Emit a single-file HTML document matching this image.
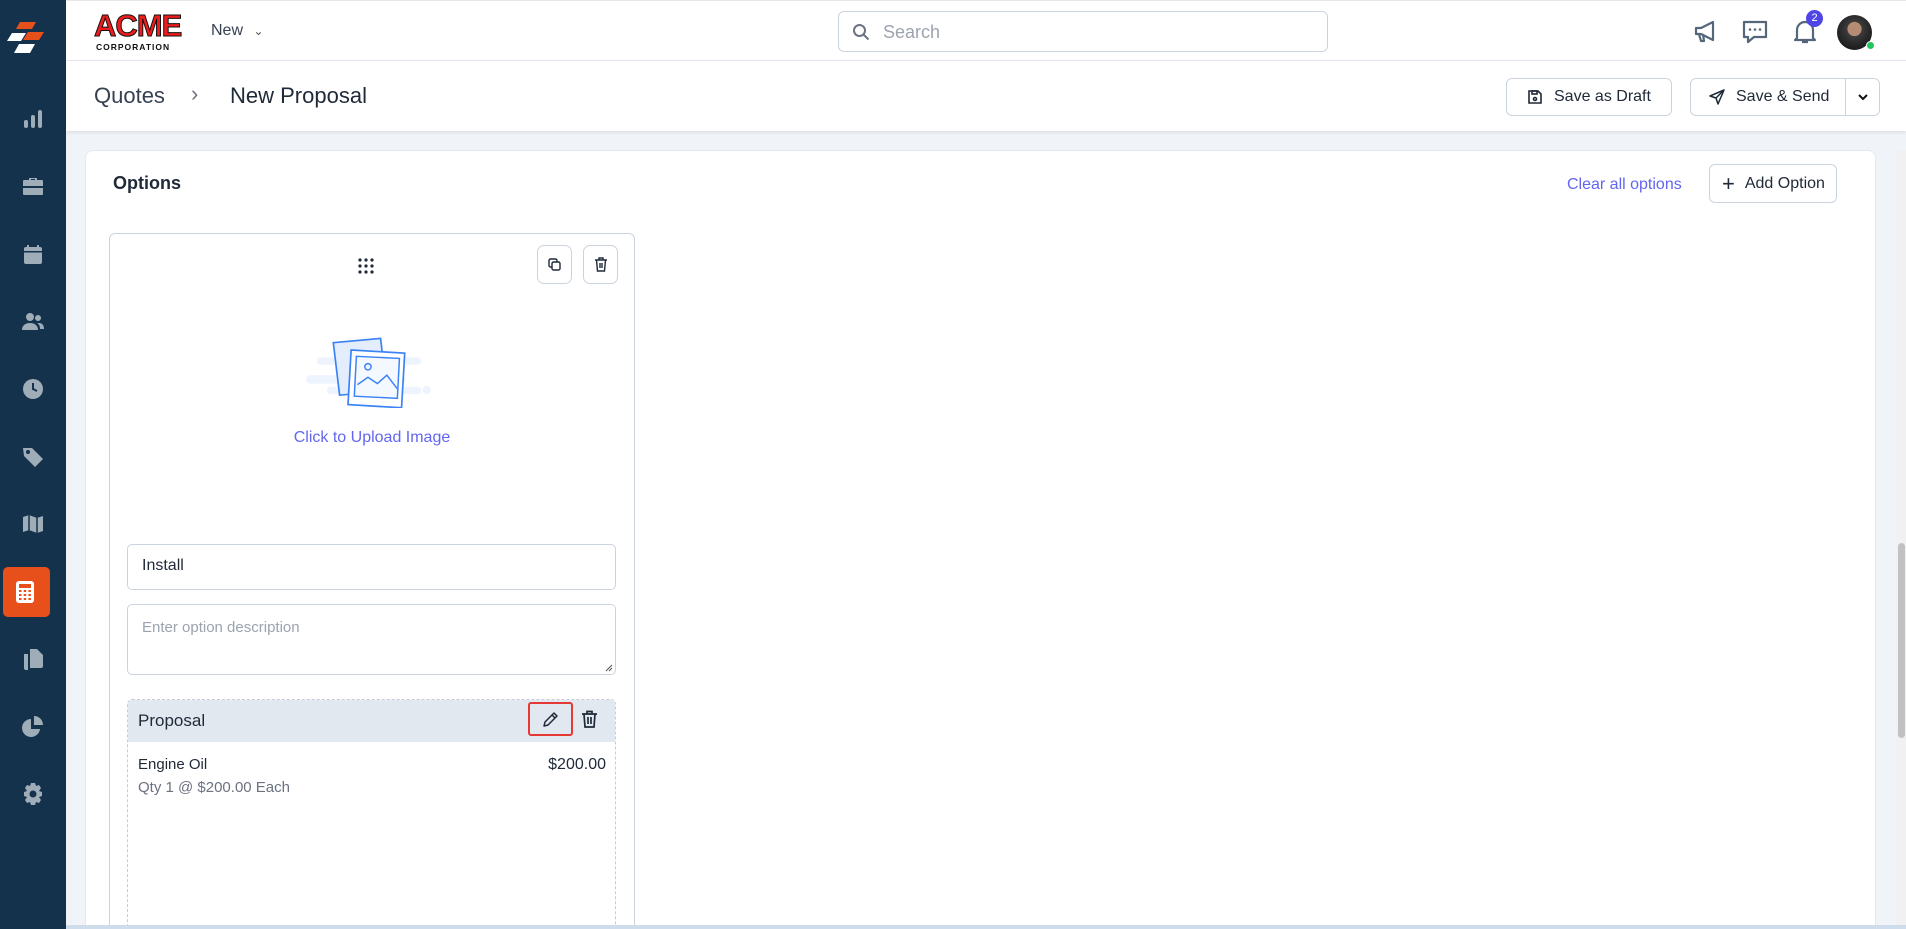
<!DOCTYPE html>
<html><head><meta charset="utf-8"><style>
*{box-sizing:border-box;margin:0;padding:0}
html,body{width:1906px;height:929px;overflow:hidden}
body{background:#f0f3f8;font-family:"Liberation Sans",sans-serif;color:#1f2937}
#root{position:relative;width:1906px;height:929px;overflow:hidden}
.a{position:absolute}
.side{left:0;top:0;width:66px;height:929px;background:#14324b}
.ic{position:absolute;left:21px;width:24px;height:24px}
.top{left:66px;top:0;width:1840px;height:61px;background:#fff;border-bottom:1px solid #e2e6ee;border-top:1px solid #e5e7eb}
.bc{left:66px;top:61px;width:1840px;height:70px;background:#fff;box-shadow:0 2px 3px rgba(0,0,0,.08)}
.btn{position:absolute;border:1px solid #cbd3df;border-radius:6px;background:#fff;font-size:16px;color:#1f2937;display:flex;align-items:center}
</style></head><body><div id="root">
<div class="a side">
 <svg class="a" style="left:6px;top:20px" width="44" height="44" viewBox="0 0 44 44">
  <polygon points="14,2 30,2 26,9 10,9" fill="#e8501b"/>
  <polygon points="22,12 38,12 33,20 17,20" fill="#e8501b"/>
  <polygon points="6,13 20,13 15,21 1,21" fill="#fff"/>
  <polygon points="13,24 29,24 24,33 8,33" fill="#fff"/>
 </svg>
 <svg class="ic" style="top:107px" viewBox="0 0 24 24" fill="#9fadb9"><rect x="3" y="13" width="4" height="8" rx="2"/><rect x="10" y="8" width="4" height="13" rx="2"/><rect x="17" y="3" width="4" height="18" rx="2"/></svg>
 <svg class="ic" style="top:175px" viewBox="0 0 24 24" fill="#9fadb9"><path d="M8 5V3h8v2h5a1 1 0 011 1v5H2V6a1 1 0 011-1h5zm2 0h4V4h-4z"/><path d="M2 13h20v6a1 1 0 01-1 1H3a1 1 0 01-1-1z"/></svg>
 <svg class="ic" style="top:243px" viewBox="0 0 24 24" fill="#9fadb9"><rect x="3" y="4" width="18" height="17" rx="2"/><rect x="6" y="2" width="2" height="4" /><rect x="16" y="2" width="2" height="4"/><rect x="3" y="8" width="18" height="1.5" fill="#14324b"/></svg>
 <svg class="ic" style="top:310px" viewBox="0 0 24 24" fill="#9fadb9"><circle cx="9" cy="7" r="4"/><path d="M1 20c0-5 4-7 8-7s8 2 8 7z"/><circle cx="17" cy="8" r="3"/><path d="M18 13c3 0 5 2 5 6h-4c0-3-1-5-3-6z"/></svg>
 <svg class="ic" style="top:377px" viewBox="0 0 24 24"><circle cx="12" cy="12" r="10" fill="#9fadb9"/><path d="M12 6v6l4 2" stroke="#14324b" stroke-width="2" fill="none"/></svg>
 <svg class="ic" style="top:445px" viewBox="0 0 24 24" fill="#9fadb9"><path d="M2 3h9l11 11-8 8L3 11z"/><circle cx="7" cy="7" r="2" fill="#14324b"/></svg>
 <svg class="ic" style="top:512px" viewBox="0 0 24 24" fill="#9fadb9"><path d="M2 5l6-2 8 3 6-2v15l-6 2-8-3-6 2z"/><path d="M8 3v15M16 6v15" stroke="#14324b" stroke-width="1.5"/></svg>
 <div class="a" style="left:3px;top:567px;width:47px;height:50px;background:#e8501b;border-radius:5px"></div>
 <svg class="a" style="left:15px;top:580px" width="20" height="24" viewBox="0 0 20 24"><rect x="1" y="1" width="18" height="22" rx="3" fill="#fff"/><rect x="4" y="4" width="12" height="4" fill="#e8501b"/><g fill="#e8501b"><rect x="4" y="10" width="2.5" height="2"/><rect x="8.7" y="10" width="2.5" height="2"/><rect x="13.4" y="10" width="2.5" height="2"/><rect x="4" y="14" width="2.5" height="2"/><rect x="8.7" y="14" width="2.5" height="2"/><rect x="13.4" y="14" width="2.5" height="2"/><rect x="4" y="18" width="2.5" height="2"/><rect x="8.7" y="18" width="2.5" height="2"/><rect x="13.4" y="18" width="2.5" height="2"/></g></svg>
 <svg class="ic" style="top:647px" viewBox="0 0 24 24" fill="#9fadb9"><path d="M9 2h7l6 6v11a2 2 0 01-2 2H9z"/><path d="M3 7h4v16h11v0H5a2 2 0 01-2-2z"/></svg>
 <svg class="ic" style="top:715px" viewBox="0 0 24 24" fill="#9fadb9"><path d="M10 4a9 9 0 109 10h-9z"/><path d="M13 1a9 9 0 019 9h-9z"/></svg>
 <svg class="ic" style="top:782px" viewBox="0 0 24 24" fill="#9fadb9"><path d="M10 1h4l1 3 3-1 2 3-2 3 3 1v4l-3 1 2 3-2 3-3-1-1 3h-4l-1-3-3 1-2-3 2-3-3-1v-4l3-1-2-3 2-3 3 1z"/><circle cx="12" cy="12" r="3.5" fill="#14324b"/></svg>
</div>
<div class="a top">
 <div class="a" style="left:28px;top:9px;width:92px;font-family:'Liberation Sans';font-weight:900;font-size:31px;color:#ee1c1c;letter-spacing:-1px;line-height:31px;-webkit-text-stroke:1px #111">ACME</div>
 <div class="a" style="left:30px;top:41px;font-size:8.5px;font-weight:bold;letter-spacing:1px;color:#111">CORPORATION</div>
 <div class="a" style="left:145px;top:21px;font-size:16px;color:#374151">New <span style="font-size:12px;margin-left:6px;color:#4b5563">&#8964;</span></div>
 <div class="a" style="left:772px;top:10px;width:490px;height:41px;border:1px solid #cbd3df;border-radius:6px">
  <svg class="a" style="left:13px;top:11px" width="18" height="18" viewBox="0 0 18 18"><circle cx="7.5" cy="7.5" r="5.5" stroke="#6b7280" stroke-width="2" fill="none"/><path d="M11.5 11.5l5 5" stroke="#6b7280" stroke-width="2"/></svg>
  <div class="a" style="left:44px;top:10px;font-size:18px;color:#9ca3af">Search</div>
 </div>
 <svg class="a" style="left:1627px;top:17px" width="26" height="26" viewBox="0 0 26 26" fill="none" stroke="#56667a" stroke-width="2.2" stroke-linejoin="round"><path d="M3 10h5l12-6v18L8 16H3z"/><path d="M6 16l2 7h3l-1-7"/></svg>
 <svg class="a" style="left:1675px;top:17px" width="28" height="28" viewBox="0 0 28 28"><path d="M3 4h22v15H13l-6 5v-5H3z" stroke="#56667a" stroke-width="2.2" fill="none" stroke-linejoin="round"/><circle cx="9" cy="11.5" r="1.3" fill="#56667a"/><circle cx="14" cy="11.5" r="1.3" fill="#56667a"/><circle cx="19" cy="11.5" r="1.3" fill="#56667a"/></svg>
 <svg class="a" style="left:1726px;top:16px" width="26" height="28" viewBox="0 0 26 28"><path d="M5 21V13a8 8 0 0116 0v8l2 2H3z" stroke="#56667a" stroke-width="2.2" fill="none" stroke-linejoin="round"/><path d="M10 25h6" stroke="#56667a" stroke-width="2.2"/></svg>
 <div class="a" style="left:1740px;top:9px;width:17px;height:17px;border-radius:50%;background:#4f46e5;color:#fff;font-size:11px;text-align:center;line-height:17px">2</div>
 <div class="a" style="left:1771px;top:14px;width:35px;height:35px;border-radius:50%;background:radial-gradient(circle at 50% 40%,#b58b74 0 25%,#3b3b3b 27%,#1e1e1e 70%)"></div>
 <div class="a" style="left:1800px;top:40px;width:9px;height:9px;border-radius:50%;background:#22c55e;border:1px solid #fff"></div>
</div>
<div class="a bc">
 <div class="a" style="left:28px;top:22px;font-size:22px;color:#374151">Quotes</div>
 <div class="a" style="left:125px;top:20px;font-size:22px;color:#6b7280">&#8250;</div>
 <div class="a" style="left:164px;top:22px;font-size:22px;color:#1f2937">New Proposal</div>
 <div class="btn" style="left:1440px;top:17px;width:166px;height:38px;padding-left:20px">
  <svg width="16" height="16" viewBox="0 0 16 16" fill="none" stroke="#1f2937" stroke-width="1.6"><path d="M2 2h9l3 3v9H2z"/><rect x="5" y="2" width="5" height="3"/><circle cx="8" cy="10" r="1.5"/></svg>
  <span style="margin-left:11px">Save as Draft</span></div>
 <div class="btn" style="left:1624px;top:17px;width:190px;height:38px;padding-left:18px">
  <svg width="16" height="16" viewBox="0 0 16 16" fill="none" stroke="#1f2937" stroke-width="1.5" stroke-linejoin="round"><path d="M15 1L1 7l6 2 2 6z"/><path d="M15 1L7 9"/></svg>
  <span style="margin-left:11px">Save &amp; Send</span>
  <div class="a" style="left:154px;top:0;width:1px;height:36px;background:#cbd3df"></div>
  <svg class="a" style="left:166px;top:13px" width="12" height="10" viewBox="0 0 12 10"><path d="M2 3l4 4 4-4" stroke="#111" stroke-width="2" fill="none"/></svg>
 </div>
</div>
<div class="a" style="left:85px;top:150px;width:1791px;height:779px;background:#fff;border:1px solid #e3e8ef;border-bottom:none;border-radius:8px 8px 0 0;overflow:hidden">
 <div class="a" style="left:27px;top:22px;font-size:18px;font-weight:bold;color:#1f2937">Options</div>
 <div class="a" style="left:1481px;top:25px;font-size:16px;color:#6366f1">Clear all options</div>
 <div class="btn" style="left:1623px;top:13px;width:128px;height:39px;padding-left:12px"><span style="font-size:22px;font-weight:300;margin-right:10px;line-height:1">+</span>Add Option</div>
 <div class="a" style="left:23px;top:82px;width:526px;height:720px;border:1px solid #cbd3df;border-radius:6px">
  <svg class="a" style="left:247px;top:23px" width="18" height="18" viewBox="0 0 18 18" fill="#1f2937"><circle cx="3" cy="3" r="1.6"/><circle cx="9" cy="3" r="1.6"/><circle cx="15" cy="3" r="1.6"/><circle cx="3" cy="9" r="1.6"/><circle cx="9" cy="9" r="1.6"/><circle cx="15" cy="9" r="1.6"/><circle cx="3" cy="15" r="1.6"/><circle cx="9" cy="15" r="1.6"/><circle cx="15" cy="15" r="1.6"/></svg>
  <div class="btn" style="left:427px;top:11px;width:35px;height:39px;justify-content:center;border-radius:7px"><svg width="14" height="14" viewBox="0 0 14 14" fill="none" stroke="#1f2937" stroke-width="1.4"><rect x="1" y="1" width="8" height="8" rx="1.5"/><rect x="4" y="4" width="8" height="8" rx="1.5" fill="#fff"/></svg></div>
  <div class="btn" style="left:473px;top:11px;width:35px;height:39px;justify-content:center;border-radius:7px"><svg width="14" height="15" viewBox="0 0 14 15" fill="none" stroke="#1f2937" stroke-width="1.4"><path d="M1 3h12M5 3V1h4v2M2.5 3l1 11h7l1-11M6 6v5M8 6v5"/></svg></div>
  <svg class="a" style="left:196px;top:100px" width="126" height="74" viewBox="0 0 120 70">
   <g fill="#eef4fe"><rect x="10" y="22" width="100" height="7" rx="3.5"/><rect x="0" y="39" width="95" height="8" rx="4"/><rect x="20" y="50" width="90" height="7" rx="3.5"/><circle cx="115" cy="53" r="4"/></g>
   <path d="M26 8l45-4 6 50-45 4z" fill="#e4edfc" stroke="#3b82f6" stroke-width="1.6"/>
   <path d="M43 15l51 3-3 52-51-3z" fill="#fff" stroke="#3b82f6" stroke-width="1.6"/>
   <path d="M48 21l41 2-2 38-41-2z" fill="#f4f8ff" stroke="#3b82f6" stroke-width="1.4"/>
   <circle cx="59" cy="31" r="3" fill="none" stroke="#3b82f6" stroke-width="1.4"/>
   <path d="M49 48l10-7 9 6 9-8 10 13" fill="none" stroke="#3b82f6" stroke-width="1.4"/>
  </svg>
  <div class="a" style="left:0;width:100%;top:195px;text-align:center;font-size:16px;color:#6366f1">Click to Upload Image</div>
  <div class="a" style="left:17px;top:310px;width:489px;height:46px;border:1px solid #cbd3df;border-radius:5px;padding:12px 14px;font-size:16px;color:#1f2937">Install</div>
  <div class="a" style="left:17px;top:370px;width:489px;height:71px;border:1px solid #cbd3df;border-radius:5px;padding:14px 14px;font-size:15px;color:#9ca3af">Enter option description
   <svg class="a" style="right:2px;bottom:2px" width="8" height="8"><path d="M1 7L7 1M4 7L7 4" stroke="#555"/></svg></div>
  <div class="a" style="left:17px;top:465px;width:489px;height:260px;border:1px dashed #c4ccd8;border-radius:5px;overflow:hidden">
   <div class="a" style="left:0;top:0;width:100%;height:42px;background:#e2e8f0"></div>
   <div class="a" style="left:10px;top:11px;font-size:17px;color:#1f2937">Proposal</div>
   <div class="a" style="left:400px;top:2px;width:45px;height:34px;border:2.5px solid #e53935;border-radius:3px"></div>
   <svg class="a" style="left:414px;top:11px" width="17" height="17" viewBox="0 0 17 17" fill="none" stroke="#1f2937" stroke-width="1.5" stroke-linejoin="round"><path d="M2 15l1-4 9-9 3 3-9 9z"/><path d="M10 4l3 3"/></svg>
   <svg class="a" style="left:453px;top:10px" width="17" height="18" viewBox="0 0 17 18" fill="none" stroke="#1f2937" stroke-width="1.7"><path d="M1 4h15M6 4V1.5h5V4M3 4l1 13h9l1-13M7 7v7M10 7v7"/></svg>
   <div class="a" style="left:10px;top:56px;font-size:15px;color:#1f2937">Engine Oil</div>
   <div class="a" style="right:9px;top:56px;font-size:16px;color:#1f2937">$200.00</div>
   <div class="a" style="left:10px;top:79px;font-size:15px;color:#6b7280">Qty 1 @ $200.00 Each</div>
  </div>
 </div>
</div>
<div class="a" style="left:1896px;top:150px;width:10px;height:779px;background:#f1f1f1"></div>
<div class="a" style="left:1898px;top:543px;width:7px;height:195px;background:#c1c1c1;border-radius:4px"></div>
<div class="a" style="left:66px;top:925px;width:1840px;height:4px;background:#cfdcec"></div>
</div></body></html>
